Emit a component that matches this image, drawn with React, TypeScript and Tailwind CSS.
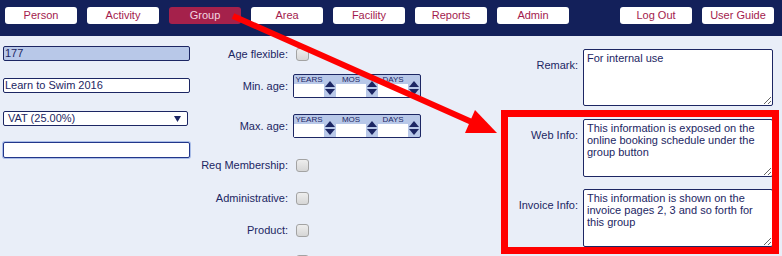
import React from "react";

const navy = "text-[#1c2663]";

const leftMenu = ["Person", "Activity", "Group", "Area", "Facility", "Reports", "Admin"];
const rightMenu = ["Log Out", "User Guide"];

function NavButton({ label, active }: { label: string; active?: boolean }) {
  return (
    <div
      className={
        active
          ? "flex h-[17px] w-[72px] items-center justify-center rounded-[3px] bg-[#a5214b] text-[11px] text-[#f3d6e0]"
          : "flex h-[17px] w-[72px] items-center justify-center rounded-[3px] bg-white text-[11px] text-[#a31a4d]"
      }
    >
      {label}
    </div>
  );
}

function Tri({ up }: { up?: boolean }) {
  return (
    <svg width="10" height="6" viewBox="0 0 10 6">
      <polygon points={up ? "5,0 10,6 0,6" : "0,0 10,0 5,6"} fill="#1c2663" />
    </svg>
  );
}

function AgeBox() {
  return (
    <div className="flex h-[24px] w-[128px] rounded-[2px] border border-[#1c2663] bg-[#b8c8e8]">
      {["YEARS", "MOS", "DAYS"].map((u) => (
        <div key={u} className="flex">
          <div className="flex w-[30px] flex-col">
            <div className={`h-[9px] text-center text-[8px] leading-[10px] ${navy}`}>{u}</div>
            <div className="h-[13px] bg-white" />
          </div>
          <div className="flex w-[12px] flex-col items-center justify-end gap-[2px] pb-[2px]">
            <Tri up />
            <Tri />
          </div>
        </div>
      ))}
    </div>
  );
}

function Check() {
  return (
    <div className="ml-[3px] h-[13px] w-[13px] rounded-[3px] border border-[#a3a3a3] bg-gradient-to-b from-[#eeeeee] to-[#d6d6d6]" />
  );
}

function MidRow({ label, mt, children }: { label: string; mt: string; children: React.ReactNode }) {
  return (
    <div className={`flex items-center ${mt}`}>
      <div className={`w-[98px] text-right text-[11px] leading-[13px] ${navy}`}>{label}</div>
      <div className="ml-[5px]">{children}</div>
    </div>
  );
}

function NoteRow({ label, mt, h, text }: { label: string; mt: string; h: string; text: string }) {
  return (
    <div className={`flex items-start ${mt}`}>
      <div className={`w-[128px] pt-[10px] text-right text-[11px] leading-[13px] ${navy}`}>{label}</div>
      <textarea
        className={`ml-[5px] w-[190px] ${h} rounded-[2px] border border-[#1c2663] bg-white px-[3px] py-[2px] text-[11px] leading-[12px] text-[#1c2663] outline-none`}
        defaultValue={text}
      />
    </div>
  );
}

export default function App() {
  return (
    <div
      className="relative h-[256px] w-[782px] overflow-hidden bg-[#e9eef8]"
      style={{ fontFamily: '"Liberation Sans", Arial, sans-serif' }}
    >
      <div className="flex h-[36px] bg-[#13205a] pl-[5px] pr-[8px] pt-[7px]">
        <div className="flex gap-[10px]">
          {leftMenu.map((m) => (
            <NavButton key={m} label={m} active={m === "Group"} />
          ))}
        </div>
        <div className="ml-auto flex gap-[10px]">
          {rightMenu.map((m) => (
            <NavButton key={m} label={m} />
          ))}
        </div>
      </div>

      <div className="flex">
        <div className="ml-[3px] flex w-[187px] flex-col">
          <div className={`mt-[10px] flex h-[15px] items-center rounded-[2px] border border-[#1c2663] bg-[#b8c8e8] pl-[1px] text-[11px] ${navy}`}>
            177
          </div>
          <div className={`mt-[17px] flex h-[15px] items-center rounded-[2px] border border-[#1c2663] bg-white pl-[1px] text-[11px] ${navy}`}>
            Learn to Swim 2016
          </div>
          <div className={`mt-[18px] flex h-[15px] w-[185px] items-center justify-between rounded-[2px] border border-[#1c2663] bg-white pl-[4px] pr-[6px] text-[11px] ${navy}`}>
            <span>VAT (25.00%)</span>
            <svg width="7" height="6" viewBox="0 0 7 6">
              <polygon points="0,0 7,0 3.5,6" fill="#1c2663" />
            </svg>
          </div>
          <div className="mt-[16px] h-[16px] rounded-[2px] border border-[#22368a] bg-white ring-1 ring-[#a9bde8]" />
        </div>

        <div className="flex w-[260px] flex-col">
          <MidRow label="Age flexible:" mt="mt-[12px]">
            <Check />
          </MidRow>
          <MidRow label="Min. age:" mt="mt-[13px]">
            <AgeBox />
          </MidRow>
          <MidRow label="Max. age:" mt="mt-[16px]">
            <AgeBox />
          </MidRow>
          <MidRow label="Req Membership:" mt="mt-[21px]">
            <Check />
          </MidRow>
          <MidRow label="Administrative:" mt="mt-[20px]">
            <Check />
          </MidRow>
          <MidRow label="Product:" mt="mt-[19px]">
            <Check />
          </MidRow>
          <MidRow label="" mt="mt-[18px]">
            <Check />
          </MidRow>
        </div>

        <div className="flex flex-col">
          <NoteRow label="Remark:" mt="mt-[13px]" h="h-[57px]" text="For internal use" />
          <NoteRow
            label="Web Info:"
            mt="mt-[13px]"
            h="h-[58px]"
            text="This information is exposed on the online booking schedule under the group button"
          />
          <NoteRow
            label="Invoice Info:"
            mt="mt-[12px]"
            h="h-[58px]"
            text="This information is shown on the invoice pages 2, 3 and so forth for this group"
          />
        </div>
      </div>

      {/* annotation overlay */}
      <div className="pointer-events-none absolute left-[501px] top-[110px] h-[144px] w-[278px] border-[7px] border-[#ff0000]" />
      <svg className="pointer-events-none absolute left-0 top-0" width="782" height="256">
        <line x1="233" y1="16" x2="474" y2="123" stroke="#ff0000" strokeWidth="6" />
        <polygon points="497,133 475,110 465,133" fill="#ff0000" />
      </svg>
    </div>
  );
}
